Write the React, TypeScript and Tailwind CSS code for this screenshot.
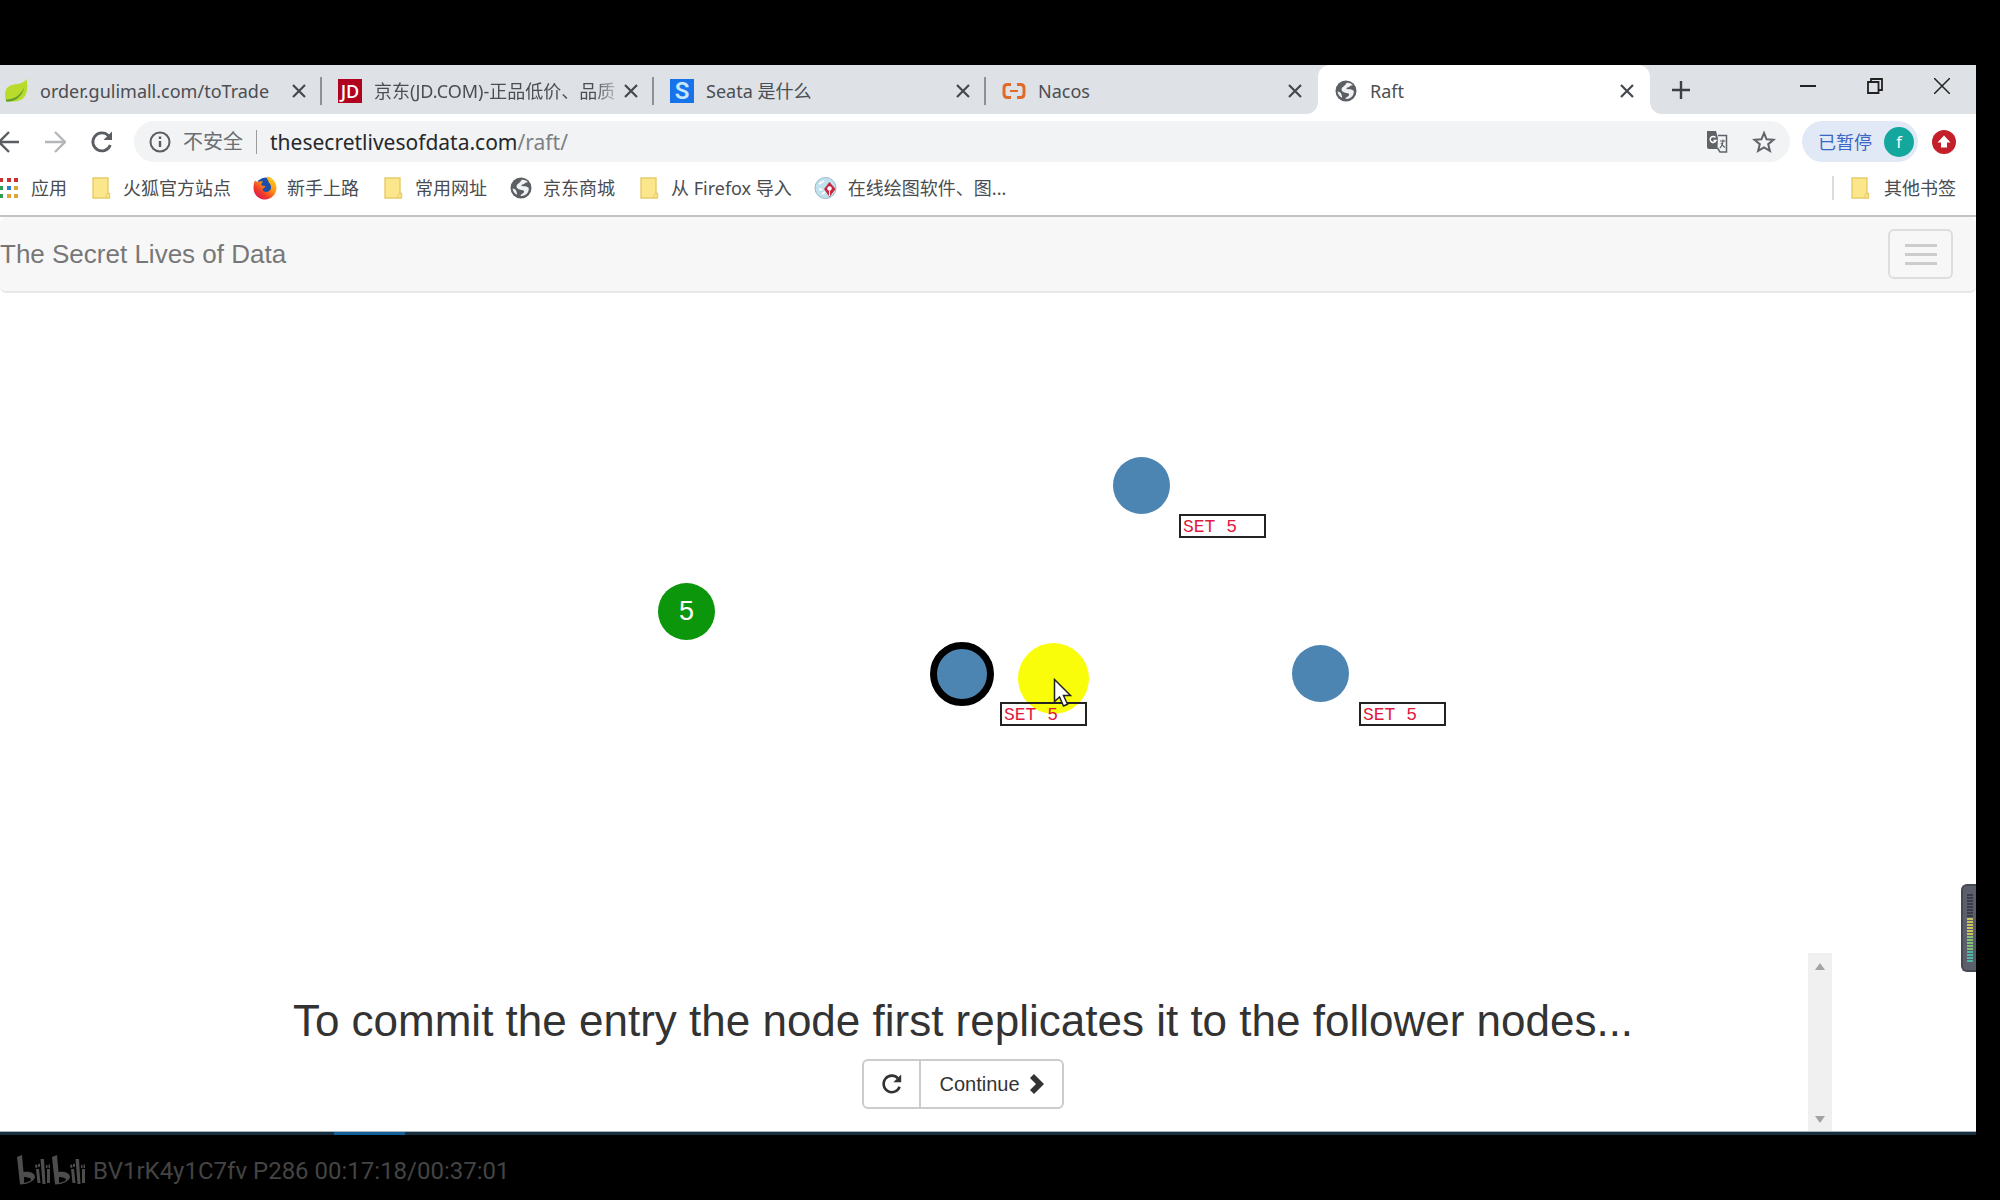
import React from "react";

type IconProps = { className?: string };

const Leaf = () => (
  <svg viewBox="0 0 24 24" className="size-6 shrink-0">
    <path d="M22.500 0C24 8 23.500 15 19 19.500c-4.500 3.800-11 3-16.500 3C-1 14 2 7.500 8 6c5-1.200 11-.8 14.500-6z" fill="#b9dc2c" />
    <path d="M2 20.500c8 0 15-4 18.500-13C19 16 12 23.500 2 22.500z" fill="#5f9e2c" />
  </svg>
);
const Jd = () => (
  <span className="flex size-6 shrink-0 items-center justify-center bg-[#b1021f] font-['Open_Sans',sans-serif] text-lg leading-6 font-semibold text-white">JD</span>
);
const Seata = () => (
  <span className="flex size-6 shrink-0 items-center justify-center bg-[#1673ea] font-['Roboto',sans-serif] text-2xl leading-6 font-semibold text-[#c9e6ff]">S</span>
);
const NacosIcon = () => (
  <svg viewBox="0 0 24 24" className="size-6 shrink-0" fill="none" stroke="#e06a28" strokeWidth="3">
    <path d="M9 5.500H5.500Q2 5.500 2 9v6q0 3.500 3.500 3.500H9M15 5.500h3.500Q22 5.500 22 9v6q0 3.500-3.500 3.500H15" />
    <path d="M8 12h8" strokeWidth="2" />
  </svg>
);
const Globe = () => (
  <svg viewBox="0 0 24 24" className="size-6 shrink-0">
    <circle cx="12" cy="12" r="10.500" fill="#5b5e62" />
    <path d="M12.500 4c2.500-.6 5 .4 6.500 2.200-1.200.2-2.200.1-3 1-.8 1-2.300.8-3.500 1.800-.7.700.5 1.200 1.500 1.200 2.200-.2 4.500 0 5.800 1.800.2 3-1 5.300-3.300 6.700-1.700 1-3.300 1.400-5 1.300.2-1.800 1.500-2 2.700-2.800 1-.8 1.300-2 .3-2.700-2-1-5-.5-6.500-2.500-1-1.800-.3-3.300 1.200-4.300 1.200-.9 2.300-1.700 3.300-3.700z" fill="#eef0f2" />
    <path d="M3.600 12.500c1.600.4 3.200 1 3.700 2.500.3 1.300 1 2 .8 3.800-2.600-1.300-4.300-3.500-4.500-6.300z" fill="#eef0f2" />
  </svg>
);
const Close = () => (
  <svg viewBox="0 0 14 14" className="size-3.5" fill="none" stroke="#45484c" strokeWidth="2.200">
    <path d="M1 1l12 12M13 1L1 13" />
  </svg>
);
const Folder = () => (
  <svg viewBox="0 0 24 24" className="size-6 shrink-0">
    <path d="M4 2h15v15.500h1.500V22H4z" fill="#fce68c" stroke="#e6cc6a" strokeWidth="1.400" />
    <path d="M17 22v-3.500l2-1.500" fill="none" stroke="#e6cc6a" />
  </svg>
);
const Firefox = () => (
  <svg viewBox="0 0 24 24" className="size-6 shrink-0">
    <defs>
      <linearGradient id="fx" x1="1" y1="0" x2="0.200" y2="1">
        <stop offset="0" stopColor="#ffe226" />
        <stop offset="0.450" stopColor="#ff9416" />
        <stop offset="0.750" stopColor="#f0392b" />
        <stop offset="1" stopColor="#d81c5b" />
      </linearGradient>
    </defs>
    <circle cx="12.500" cy="11" r="9.500" fill="#1c4fa8" />
    <path d="M2 4.500c.8.7 1.800 1.200 3 1.400C7 5 8.800 5 10 5.700 8.500 7 8 8 8.800 9.500c1.200.7 3 0 3.700 1.200-1 1.300-2.700 1.500-3 3 1 2.500 4.500 3 7 1 2.500-2.200 1.800-6-.5-8C15 4 13.500 2.500 14 .5c5.500 1 9.500 5.500 9.500 11.300C23.500 18.500 18.300 23.500 12 23.500S.5 18.500.5 12C.5 9 1 6.500 2 4.500z" fill="url(#fx)" />
  </svg>
);
const DrawIcon = () => (
  <svg viewBox="0 0 24 24" className="size-6 shrink-0">
    <circle cx="11.500" cy="12" r="10.500" fill="#bfe2ee" stroke="#9ab9c6" />
    <path d="M5 8l5-3M5 13l3 1M8 18l3-2" stroke="#fff" strokeWidth="2" />
    <path d="M15.500 6l6 7-6 8-5.500-8z" fill="#c9273d" />
    <circle cx="15.500" cy="12.500" r="2.200" fill="#fff" />
    <path d="M15.500 15v5" stroke="#fff" />
  </svg>
);
const Apps = () => (
  <svg viewBox="0 0 18 20" className="h-5 w-[18px] shrink-0">
    <path d="M0 0h3v4H0zM7 0h4v4H7zM14 0h4v4h-4z" fill="#c8312f" />
    <path d="M0 8h3v4H0zM0 16h3v4H0z" fill="#2f9e55" />
    <path d="M7 8h4v4H7z" fill="#2c7cd8" />
    <path d="M14 8h4v4h-4zM7 16h4v4H7zM14 16h4v4h-4z" fill="#e0a43a" />
  </svg>
);
const Reload = ({ className }: IconProps) => (
  <svg viewBox="0 0 24 24" className={className} fill="none" stroke="currentColor" strokeWidth="2.800">
    <path d="M20.300 15A9 9 0 1 1 18.500 5.800" />
    <path d="M22 1.500V10h-8.500z" fill="currentColor" stroke="none" />
  </svg>
);

const tabs = [
  { title: "order.gulimall.com/toTrade", icon: <Leaf /> },
  { title: "京东(JD.COM)-正品低价、品质", icon: <Jd /> },
  { title: "Seata 是什么", icon: <Seata /> },
  { title: "Nacos", icon: <NacosIcon /> },
  { title: "Raft", icon: <Globe /> },
];

function TabStrip() {
  return (
    <div className="flex h-[49px] bg-[#dee1e6]">
      {tabs.map((t, i) => {
        const active = i === 4;
        return (
          <div
            key={t.title}
            className={
              "relative flex items-center pt-0.5 pr-4 " +
              (i === 0 ? "w-[322px] pl-1 " : "w-[332px] pl-4 ") +
              (active ? "rounded-t-xl bg-white" : "")
            }
          >
            {t.icon}
            <a
              href="#"
              className={
                "ml-3 min-w-0 flex-1 text-lg leading-6 whitespace-nowrap text-[#4b4e52] " +
                (i === 1 ? "[mask-image:linear-gradient(to_right,black_88%,transparent)]" : "")
              }
            >
              {t.title}
            </a>
            <button aria-label="Close tab"><Close /></button>
            {i < 3 && <span className="absolute top-3 right-0 h-7 w-0.5 bg-[#8d9094]" />}
            {active && (
              <>
                <span className="absolute bottom-0 -left-3 size-3 bg-white before:block before:size-3 before:rounded-br-xl before:bg-[#dee1e6]" />
                <span className="absolute -right-3 bottom-0 size-3 bg-white before:block before:size-3 before:rounded-bl-xl before:bg-[#dee1e6]" />
              </>
            )}
          </div>
        );
      })}
      <button aria-label="New tab" className="ml-[22px] self-center">
        <svg viewBox="0 0 18 18" className="size-[18px]" stroke="#3c4043" strokeWidth="2.400"><path d="M9 0v18M0 9h18" /></svg>
      </button>
      <div className="ml-auto flex items-center gap-[51px] pr-[26px] pb-2 text-[#222]">
        <button aria-label="Minimize"><svg viewBox="0 0 16 16" className="size-4" stroke="currentColor" strokeWidth="2"><path d="M0 8h16" /></svg></button>
        <button aria-label="Restore"><svg viewBox="0 0 16 16" className="size-4" fill="none" stroke="currentColor" strokeWidth="1.800"><path d="M1 4h10.500v11H1zM4 4V1h11v11h-3.500" /></svg></button>
        <button aria-label="Close window"><svg viewBox="0 0 16 16" className="size-4" stroke="currentColor" strokeWidth="1.500"><path d="M0 0l16 16M16 0L0 16" /></svg></button>
      </div>
    </div>
  );
}

function Toolbar() {
  return (
    <div className="flex h-[55px] items-center bg-white pr-5 text-[#5a5d61]">
      <button aria-label="Back"><svg viewBox="0 0 20 22" className="h-[22px] w-5" fill="none" stroke="currentColor" strokeWidth="2.400"><path d="M19 11H0M9 1L-1 11l10 10" /></svg></button>
      <button aria-label="Forward" className="ml-6 text-[#b4b6b9]"><svg viewBox="0 0 22 22" className="size-[22px]" fill="none" stroke="currentColor" strokeWidth="2.400"><path d="M1 11h19M11 1l10 10-10 10" /></svg></button>
      <button aria-label="Reload" className="ml-6"><Reload className="size-6" /></button>
      <div className="ml-5 flex h-[41px] min-w-0 flex-1 items-center rounded-full bg-[#f1f3f4] pr-[14px] pl-[15px]">
        <svg viewBox="0 0 22 22" className="size-[22px] shrink-0" fill="none" stroke="currentColor" strokeWidth="2"><circle cx="11" cy="11" r="9.500" /><path d="M11 10v6M11 5.500v2.500" strokeWidth="2.400" /></svg>
        <span className="ml-3 text-xl leading-6 whitespace-nowrap text-[#6b6e72]">不安全</span>
        <span className="mx-[13px] h-6 w-px bg-[#9a9da0]" />
        <p className="min-w-0 flex-1 text-[21px] leading-6 whitespace-nowrap text-[#7d8084]">
          <span className="text-[#26282b]">thesecretlivesofdata.com</span>/raft/
        </p>
        <button aria-label="Translate">
          <svg viewBox="0 0 24 24" className="size-6"><path d="M2 1h9l5 18H4q-2 0-2-2z" fill="#5f6368" /><path d="M13 5.500h8.500V22H15l-2.500-4" fill="#f1f3f4" stroke="#5f6368" strokeWidth="1.500" /><path d="M10.500 7.500a3 3 0 1 0 .5 3H8.500" fill="none" stroke="#fff" strokeWidth="1.500" /><path d="M15 11h5.500M18 9.500V11c0 3-1 5-3 7M16 13c1 2 2 3 4 4.500" fill="none" stroke="#5f6368" strokeWidth="1.200" /></svg>
        </button>
        <button aria-label="Bookmark" className="ml-[23px]">
          <svg viewBox="0 0 24 24" className="size-6" fill="none" stroke="#5f6368" strokeWidth="2"><path d="M12 3l2.600 6.300 6.900.5-5.300 4.400 1.700 6.700L12 17.300 6.100 20.900l1.700-6.700L2.500 9.800l6.900-.5z" /></svg>
        </button>
      </div>
      <button className="ml-3 flex h-[41px] items-center rounded-full bg-[#e1e9f7] pr-1 pl-4 text-lg leading-6 text-[#3a66c4]">
        已暂停
        <span className="ml-3 flex size-[30px] items-center justify-center rounded-full bg-[#14a79d] text-base text-white">f</span>
      </button>
      <button aria-label="Update" className="ml-3.5">
        <svg viewBox="0 0 24 24" className="size-6"><circle cx="12" cy="12" r="12" fill="#c4202b" /><path d="M12 5.500l6.500 7h-3.500v5H9v-5H5.500z" fill="#fff" /></svg>
      </button>
    </div>
  );
}

const bookmarks = [
  { label: "火狐官方站点", icon: <Folder /> },
  { label: "新手上路", icon: <Firefox /> },
  { label: "常用网址", icon: <Folder /> },
  { label: "京东商城", icon: <Globe /> },
  { label: "从 Firefox 导入", icon: <Folder /> },
  { label: "在线绘图软件、图...", icon: <DrawIcon /> },
];

function BookmarkBar() {
  return (
    <nav className="flex h-12 items-center border-b-2 border-[#c4c4c4] bg-white pr-5 pb-2 text-lg leading-6 whitespace-nowrap text-[#4a4c50]">
      <a href="#" className="flex items-center gap-[13px]"><Apps />应用</a>
      {bookmarks.map((b) => (
        <a key={b.label} href="#" className="ml-[22px] flex items-center gap-2.5">{b.icon}{b.label}</a>
      ))}
      <a href="#" className="ml-auto flex items-center gap-3 border-l-2 border-[#dadce0] pl-3.5"><Folder />其他书签</a>
    </nav>
  );
}

function Entry({ className }: { className: string }) {
  return (
    <div className={"absolute h-6 w-[87px] border-2 border-[#222] pl-0.5 font-['Liberation_Mono',monospace] text-lg leading-[22px] text-[#e0193c] " + className}>
      SET 5
    </div>
  );
}

function Diagram() {
  return (
    <div className="relative h-[660px]">
      <div className="absolute top-[290px] left-[658px] flex size-[57px] items-center justify-center rounded-full bg-[#0c960c] text-[27px] text-white">5</div>
      <div className="absolute top-[164px] left-[1113px] size-[57px] rounded-full bg-[#4c84b2]" />
      <div className="absolute top-[352px] left-[1292px] size-[57px] rounded-full bg-[#4c84b2]" />
      <div className="absolute top-[349px] left-[930px] size-16 rounded-full border-7 border-black bg-[#4c84b2]" />
      <div className="absolute top-[350px] left-[1018px] size-[71px] rounded-full bg-[#f9fd0a]" />
      <Entry className="top-[221px] left-[1179px]" />
      <Entry className="top-[409px] left-[1000px]" />
      <Entry className="top-[409px] left-[1359px]" />
      <svg viewBox="0 0 20 30" className="absolute top-[385px] left-[1053px] h-[30px] w-5"><path d="M1.500 1.500v22l5-4.500 4 9 4-1.700-4-8.800h7z" fill="#fff" stroke="#222" strokeWidth="1.500" /></svg>
    </div>
  );
}

function Meter() {
  return (
    <div className="absolute top-[819px] right-0 h-[88px] w-[15px] rounded-l-md border-2 border-r-0 border-[#454952] bg-[#5b5f6b] pt-2 pl-1">
      <div className="flex w-1.5 flex-col gap-px">
        {Array.from({ length: 23 }, (_, i) => (
          <span key={i} className={"h-0.5 " + (i < 8 ? "bg-[#3a3d49]" : i < 14 ? "bg-[#c9c55e]" : i < 19 ? "bg-[#86bf76]" : "bg-[#4fb8a4]")} />
        ))}
      </div>
    </div>
  );
}

function Watermark() {
  return (
    <footer className="flex items-center gap-2 pt-5 pl-[17px] text-[#4d4d4d]">
      <svg viewBox="0 0 68 32" className="h-8 w-[68px]" fill="currentColor">
        <g id="bili">
          <path fillRule="evenodd" d="M0 2l5-2 1.500 17c6-1 11 1 11.500 4.500 0 4.500-8 8-15 8zM7 22v6c4-1 7-2 7-3.500S10 22 7 22z" />
          <path d="M19 14h3l1.500 14h-3zM23.500 4h3.500l1.500 25h-3zM30 14h3v14h-3zM18 10l2-.5.5 3-2 .5zM21 9l2-.3v3l-2 .3zM29 10h1.500v3H29zM31.500 9.500H33v3.500h-1.500z" />
        </g>
        <use href="#bili" x="35" />
      </svg>
      <p className="font-['Roboto',sans-serif] text-2xl leading-8 text-[#444]">BV1rK4y1C7fv P286 00:17:18/00:37:01</p>
    </footer>
  );
}

export default function App() {
  return (
    <div className="min-h-screen bg-black pt-[65px] font-['Noto_Sans','Noto_Sans_CJK_SC',sans-serif]">
      <div className="relative mr-6 overflow-hidden bg-white">
        <TabStrip />
        <Toolbar />
        <BookmarkBar />
        <main className="font-['Liberation_Sans',Arial,sans-serif] text-[#333]">
          <header className="flex h-[76px] items-center justify-between rounded-md border-b-2 border-[#e7e7e7] bg-[#f7f7f7] pr-[23px]">
            <a href="#" className="text-[26px] leading-8 text-[#777]">The Secret Lives of Data</a>
            <button aria-label="Toggle navigation" className="flex h-[50px] w-[65px] flex-col items-center justify-center gap-1.5 rounded-md border-2 border-[#ddd]">
              <span className="h-[3px] w-8 bg-[#ccc]" /><span className="h-[3px] w-8 bg-[#ccc]" /><span className="h-[3px] w-8 bg-[#ccc]" />
            </button>
          </header>
          <Diagram />
          <section className="mr-36 ml-[118px] flex h-[178px]">
            <div className="flex flex-1 flex-col items-center pt-[42px]">
              <h1 className="text-[44px] leading-[52px] whitespace-nowrap">To commit the entry the node first replicates it to the follower nodes...</h1>
              <div className="mt-3 flex h-[50px] text-xl leading-6">
                <button aria-label="Restart" className="flex w-[59px] items-center justify-center rounded-l-md border-2 border-[#ccc]"><Reload className="size-[22px]" /></button>
                <button className="-ml-0.5 flex items-center gap-2.5 rounded-r-md border-2 border-[#ccc] px-[18px]">
                  Continue
                  <svg viewBox="0 0 14 20" className="h-5 w-3.5" fill="#333"><path d="M4 0l10 10L4 20 0 16l6-6-6-6z" /></svg>
                </button>
              </div>
            </div>
            <div className="flex w-6 flex-col items-center justify-between bg-[#f0f0f0] pt-2.5 pb-2 text-[#a3a3a3]">
              <svg viewBox="0 0 10 7" className="h-[7px] w-2.5" fill="currentColor"><path d="M5 0l5 7H0z" /></svg>
              <svg viewBox="0 0 10 7" className="h-[7px] w-2.5" fill="currentColor"><path d="M5 7l5-7H0z" /></svg>
            </div>
          </section>
        </main>
        <div className="flex h-1 border-t border-[#a9b5bb] bg-[#16303f]"><span className="ml-[334px] w-[71px] bg-[#14609a]" /></div>
        <Meter />
      </div>
      <Watermark />
    </div>
  );
}
